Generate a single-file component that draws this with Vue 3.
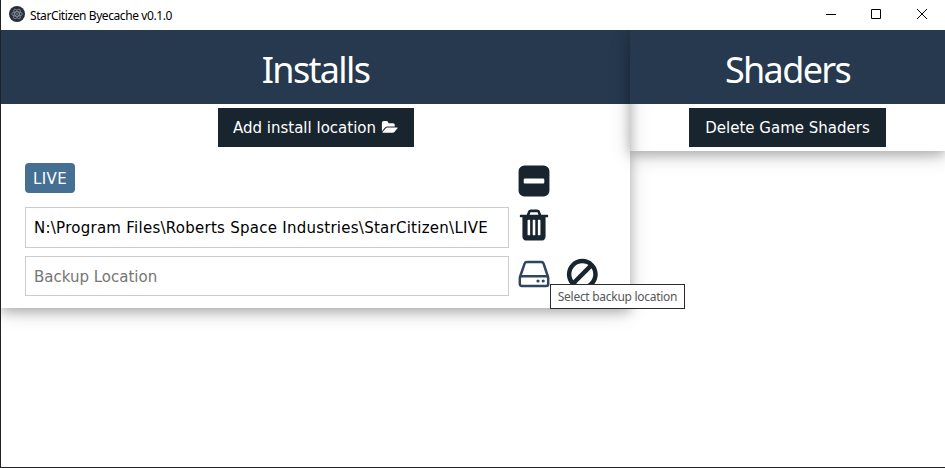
<script setup>
import { ref } from 'vue'

const installs = ref([
  {
    name: 'LIVE',
    path: 'N:\\Program Files\\Roberts Space Industries\\StarCitizen\\LIVE',
    backup: '',
  },
])
</script>

<template>
  <div class="window">
    <header class="titlebar">
      <svg class="app-icon" viewBox="0 0 16 16">
        <circle cx="8" cy="8" r="8" fill="#2b2e3a" />
        <g fill="none" stroke="#8796a0" stroke-width="0.8">
          <ellipse cx="8" cy="8" rx="5.4" ry="2.2" transform="rotate(0 8 8)" />
          <ellipse cx="8" cy="8" rx="5.4" ry="2.2" transform="rotate(60 8 8)" />
          <ellipse cx="8" cy="8" rx="5.4" ry="2.2" transform="rotate(120 8 8)" />
        </g>
        <circle cx="8" cy="8" r="0.7" fill="#9fc4cc" />
      </svg>
      <span class="app-title">StarCitizen Byecache v0.1.0</span>
      <div class="controls">
        <svg viewBox="0 0 10 10"><path d="M0 5.5h10" /></svg>
        <svg viewBox="0 0 10 10"><path d="M.5 .5h9v9h-9z" /></svg>
        <svg viewBox="0 0 10 10" class="close"><path d="M0 0l10 10M10 0L0 10" /></svg>
      </div>
    </header>

    <main class="content">
      <section class="card installs">
        <div class="card-head"><h1>Installs</h1></div>
        <div class="action">
          <button class="btn add">
            <span>Add install location</span>
            <svg class="folder" viewBox="0 0 1944 1792">
              <path d="M1943 952q0 31-31 66l-336 396q-43 51-120.500 86.500t-143.500 35.500h-1088q-34 0-60.500-13t-26.500-43q0-31 31-66l336-396q43-51 120.500-86.500t143.500-35.500h1088q34 0 60.500 13t26.500 43zm-343-344v160h-832q-94 0-197 47.500t-164 119.500l-337 396-5 6q0-4-.5-12.500t-.5-12.500v-960q0-92 66-158t158-66h320q92 0 158 66t66 158v32h544q92 0 158 66t66 158z" />
            </svg>
          </button>
        </div>
        <div v-for="item in installs" :key="item.name" class="install">
          <div class="row row-name">
            <div class="cell"><span class="tag">{{ item.name }}</span></div>
            <svg class="icon" viewBox="0 0 1792 1792">
              <path d="M1408 960v-128q0-26-19-45t-45-19h-896q-26 0-45 19t-19 45v128q0 26 19 45t45 19h896q26 0 45-19t19-45zm256-544v960q0 119-84.500 203.500t-203.500 84.500h-960q-119 0-203.500-84.500t-84.500-203.500v-960q0-119 84.500-203.500t203.500-84.500h960q119 0 203.500 84.500t84.500 203.500z" />
            </svg>
          </div>
          <div class="row row-path">
            <div class="cell"><div class="field path"><span>{{ item.path }}</span></div></div>
            <svg class="icon" viewBox="0 0 1792 1792">
              <path d="M704 1376v-704q0-14-9-23t-23-9h-64q-14 0-23 9t-9 23v704q0 14 9 23t23 9h64q14 0 23-9t9-23zm256 0v-704q0-14-9-23t-23-9h-64q-14 0-23 9t-9 23v704q0 14 9 23t23 9h64q14 0 23-9t9-23zm256 0v-704q0-14-9-23t-23-9h-64q-14 0-23 9t-9 23v704q0 14 9 23t23 9h64q14 0 23-9t9-23zm-544-992h448l-48-117q-7-9-17-11h-317q-10 2-17 11zm928 32v64q0 14-9 23t-23 9h-96v948q0 83-47 143.500t-113 60.500h-832q-66 0-113-58.500t-47-141.500v-952h-96q-14 0-23-9t-9-23v-64q0-14 9-23t23-9h309l70-167q15-37 54-63t79-26h320q40 0 79 26t54 63l70 167h309q14 0 23 9t9 23z" />
            </svg>
          </div>
          <div class="row row-backup">
            <div class="cell"><div class="field backup"><span>{{ item.backup || 'Backup Location' }}</span></div></div>
            <div class="icon-wrap">
              <svg class="icon hovered" viewBox="0 0 36 36">
                <path d="M3.800 21.500L8.600 7.600Q9.200 6 10.900 6H25.300Q27 6 27.600 7.600L32.200 21.500M5.900 20.200H30.100Q32.200 20.200 32.200 22.100V27.900Q32.200 29.900 30.200 29.900H5.800Q3.800 29.900 3.800 27.900V22.100Q3.800 20.200 5.900 20.200Z" fill="none" stroke="#2f475e" stroke-width="2.500" />
                <circle cx="22" cy="25" r="1.600" fill="#2f475e" />
                <circle cx="27.200" cy="25" r="1.600" fill="#2f475e" />
              </svg>
              <div class="tooltip"><span>Select backup location</span></div>
            </div>
            <svg class="icon ban" viewBox="0 0 36 36">
              <circle cx="18.300" cy="18.300" r="13.200" fill="none" stroke="#18252f" stroke-width="4.500" />
              <path d="M9.100 27.500L27.500 9.100" stroke="#18252f" stroke-width="4.500" />
            </svg>
          </div>
        </div>
      </section>

      <section class="card shaders">
        <div class="card-head"><h1>Shaders</h1></div>
        <div class="action"><button class="btn delete"><span>Delete Game Shaders</span></button></div>
      </section>
    </main>
  </div>
</template>

<style>
body {
  margin: 0;
  background: #fff;
}
</style>

<style scoped>
* {
  box-sizing: border-box;
}
.window {
  width: 945px;
  height: 468px;
  display: flex;
  flex-direction: column;
  overflow: hidden;
  background: #fff;
  border-left: 1px solid #222226;
  border-bottom: 1px solid #222226;
  font-family: Verdana, "DejaVu Sans", sans-serif;
  font-size: 15px;
}
.titlebar {
  height: 30px;
  flex: none;
  display: flex;
  align-items: center;
  padding-left: 8px;
}
.app-icon {
  width: 16px;
  height: 16px;
  margin-top: -2px;
}
.app-title {
  margin-left: 5px;
  padding-top: 1px;
  font: 12px/16px "Segoe UI", "Noto Sans", sans-serif;
  letter-spacing: -0.41px;
  color: #000;
}
.controls {
  margin-left: auto;
  margin-right: 18px;
  display: flex;
  gap: 35px;
}
.controls svg {
  width: 10px;
  height: 10px;
  margin-top: -2px;
  fill: none;
  stroke: #000;
  stroke-width: 1;
}
.controls .close {
  margin-left: 1px;
  overflow: visible;
}
.content {
  flex: 1;
  display: flex;
  align-items: flex-start;
  overflow: hidden;
}
.card {
  box-shadow: 0 4px 10px 0 rgba(0, 0, 0, 0.2), 0 4px 20px 0 rgba(0, 0, 0, 0.19);
}
.installs {
  width: 629px;
  height: 278px;
}
.shaders {
  width: 315px;
  height: 121px;
}
.card-head {
  height: 74px;
  display: flex;
  justify-content: center;
  align-items: center;
  background: #26394e;
  color: #fff;
}
h1 {
  margin: 5px 0 0;
  font: 400 36px/54px "Segoe UI", "Noto Sans", sans-serif;
  letter-spacing: -1.65px;
}
.action {
  padding-top: 4px;
  display: flex;
  justify-content: center;
}
.btn {
  height: 39px;
  display: flex;
  align-items: center;
  justify-content: center;
  border: 0;
  padding: 0;
  background: #18252f;
  color: #fff;
  font: inherit;
  white-space: nowrap;
}
.add {
  width: 196px;
  gap: 5px;
}
.delete {
  width: 197px;
}
.folder {
  width: 17px;
  height: 15px;
  fill: #fff;
}
.install {
  padding: 16px 0 0 24px;
}
.row {
  display: flex;
  align-items: flex-start;
}
.row-name {
  height: 44px;
}
.row-path {
  height: 49px;
}
.cell {
  width: 491px;
}
.tag {
  display: inline-flex;
  align-items: center;
  width: 50px;
  height: 30px;
  padding: 2px 0 0 8px;
  letter-spacing: 0.4px;
  border-radius: 4px;
  background: #457094;
  color: #fff;
}
.field {
  width: 484px;
  display: flex;
  align-items: center;
  padding-left: 8px;
  border: 1px solid #ccc;
  color: #000;
  white-space: nowrap;
}
.path {
  height: 41px;
  letter-spacing: 0.26px;
}
.backup {
  height: 40px;
  padding-top: 2px;
  color: #757575;
}
.icon {
  display: block;
  width: 36px;
  height: 36px;
  fill: #18252f;
}
.icon-wrap {
  position: relative;
}
.ban {
  margin-left: 12px;
}
.tooltip {
  position: absolute;
  left: 34px;
  top: 28px;
  z-index: 2;
  width: 135px;
  height: 25px;
  display: flex;
  align-items: center;
  justify-content: center;
  border: 1px solid #2b2b2b;
  background: #fff;
  color: #575757;
  font: 12px/16px "Segoe UI", "Noto Sans", sans-serif;
  letter-spacing: -0.28px;
  white-space: nowrap;
}
</style>
